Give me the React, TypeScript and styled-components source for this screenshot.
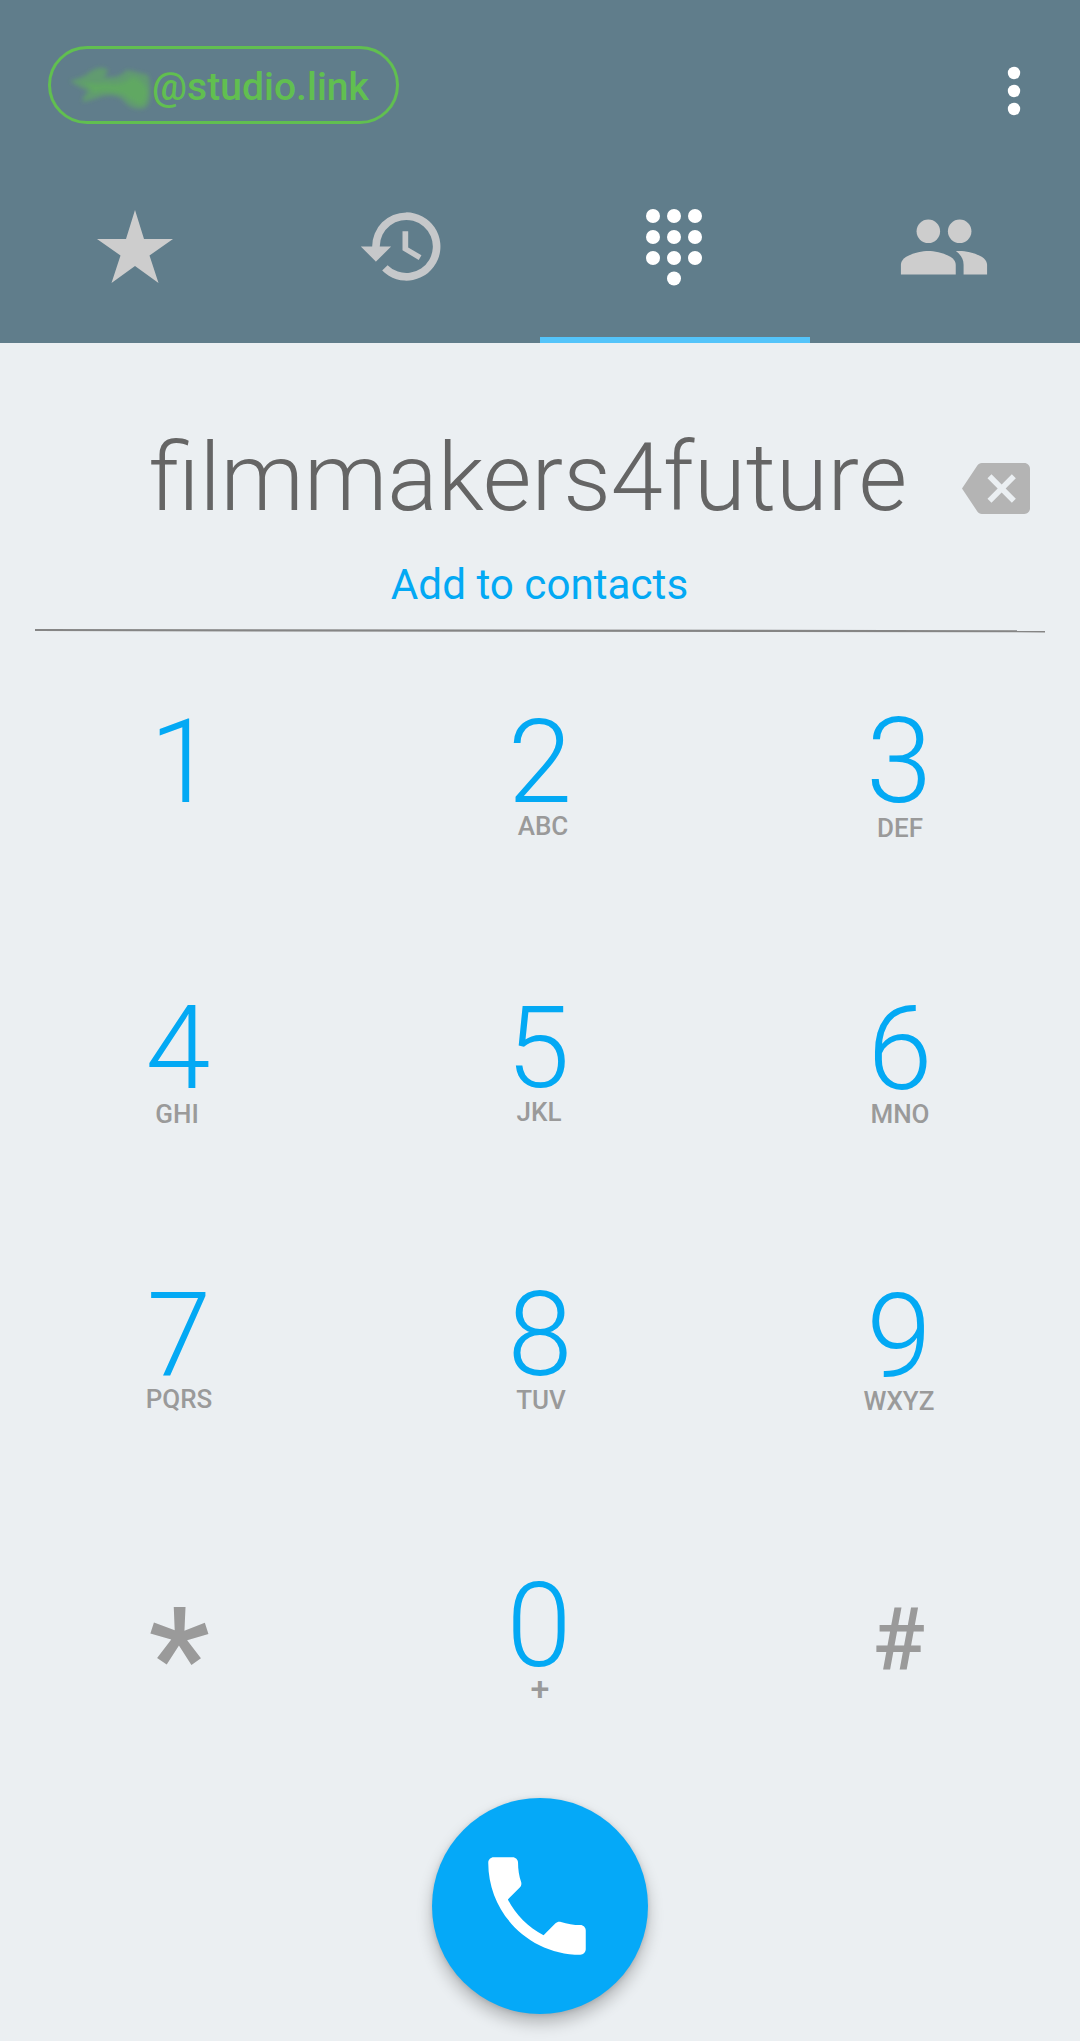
import React from "react";
import styled, { createGlobalStyle } from "styled-components";

const Global = createGlobalStyle`
  * { box-sizing: border-box; }
  body { margin: 0; background: #ebeff2; font-family: Roboto, "Liberation Sans", sans-serif; }
  button { border: 0; padding: 0; background: none; font: inherit; color: inherit; }
`;
const Screen = styled.main`
  width: 1080px; height: 2041px; display: flex; flex-direction: column; background: #ebeff2; overflow: hidden;
`;
const Header = styled.header`
  height: 343px; flex: none; display: flex; flex-direction: column; background: #607d8b;
`;
const Bar = styled.div`
  height: 172px; padding: 46px 56px 0 48px; display: flex; justify-content: space-between; align-items: flex-start;
`;
const Account = styled.div`
  width: 351px; height: 78px; border: 3px solid #61bf50; border-radius: 39px; color: #61bf50;
  display: flex; align-items: center; padding: 4px 0 0 20px; font-size: 39.1px; font-weight: 500; line-height: 68px;
`;
const Smudge = styled.svg`width: 81px; height: 48px; display: block; flex: none; overflow: visible;`;
const Menu = styled.button`height: 50px; margin-top: 20px; display: flex;`;
const Tabs = styled.nav`height: 171px; display: grid; grid-template-columns: repeat(4, 1fr);`;
const Tab = styled.button<{ $on?: boolean; $tint?: string }>`
  display: flex; justify-content: center; align-items: flex-start;
  color: ${p => (p.$on ? "#fff" : p.$tint ?? "#cdcdcd")};
  border-bottom: 6px solid ${p => (p.$on ? "#54c4fa" : "transparent")};
`;
const Glyph = styled.svg<{ $top?: number; $right?: number }>`
  display: block; flex: none; fill: currentColor; margin-top: ${p => p.$top ?? 0}px; margin-right: ${p => p.$right ?? 0}px;
`;
const Entry = styled.section`
  height: 289px; flex: none; margin: 0 35px; display: flex; flex-direction: column;
`;
const NumberRow = styled.div`
  height: 206px; flex: none; display: flex; align-items: flex-start; justify-content: flex-end; color: #b4b4b4;
`;
const Dialed = styled.div`
  margin: 80px 55px 0 0; font-size: 94px; line-height: 110px; font-weight: 300; color: #656565; white-space: nowrap;
`;
const Add = styled.button`
  color: #03a9f4; font-size: 42.2px; line-height: 60px; height: 79px; flex: none; text-align: center;
  display: flex; justify-content: center; align-items: flex-start; padding: 6px 1px 0 0;
`;
const Rule = styled.svg`display: block; width: 1010px; height: 4px; flex: none; overflow: visible;`;
const Pad = styled.section`
  flex: none; display: grid; grid-template-columns: repeat(3, 360px); grid-template-rows: repeat(4, 288px);
`;
const Key = styled.button<{ $x?: number; $y?: number }>`
  display: flex; flex-direction: column; align-items: center;
  padding-top: ${p => 65 + (p.$y ?? 0)}px;
  margin-left: ${p => p.$x ?? 0}px; margin-right: ${p => -(p.$x ?? 0)}px;
`;
const Digit = styled.span<{ $size?: number }>`
  color: #03a9f4; font-weight: 300; font-size: ${p => p.$size ?? 117}px; line-height: 122px; height: 111px; flex: none;
`;
const Letters = styled.span<{ $x?: number; $y?: number; $size?: number }>`
  color: #9a9a9a; font-size: ${p => p.$size ?? 26}px; line-height: 30px; font-weight: 500;
  margin-top: ${p => p.$y ?? 0}px; padding-left: ${p => Math.max(p.$x ?? 0, 0) * 2}px;
  padding-right: ${p => Math.max(-(p.$x ?? 0), 0) * 2}px;
`;
const Sign = styled.span<{ $size: number; $top: number }>`
  color: #9a9a9a; font-size: ${p => p.$size}px; line-height: 104px; font-weight: 500; margin-top: ${p => p.$top}px;
`;
const Call = styled.button`
  width: 216px; height: 216px; border-radius: 50%; background: #05a9f8; color: #fff; margin: 14px auto 0; flex: none;
  display: flex; align-items: center; justify-content: center;
  box-shadow: 0 9px 16px rgba(0,0,0,.24), 0 1px 5px rgba(0,0,0,.12);
`;

type KeySpec = { digit: string; letters?: string; x?: number; y?: number; lx?: number; ly?: number; size?: number; letterSize?: number };

const keys: KeySpec[] = [
  { digit: "1", x: 2, y: 4 },
  { digit: "2", letters: "ABC", y: 4, lx: 3, ly: -1, size: 116 },
  { digit: "3", letters: "DEF", x: -1, y: 4, lx: 1, ly: 1, size: 119 },
  { digit: "4", letters: "GHI", x: -2, y: 2, lx: -1, ly: 1 },
  { digit: "5", letters: "JKL", x: -2, y: 2, lx: 1, ly: -1, size: 114 },
  { digit: "6", letters: "MNO", y: 3 },
  { digit: "7", letters: "PQRS", x: -1, y: 1, ly: -1, size: 116 },
  { digit: "8", letters: "TUV", y: 1, lx: 1 },
  { digit: "9", letters: "WXYZ", x: -1, y: 2 },
];

const DialKey = ({ k }: { k: KeySpec }) => (
  <Key $x={k.x} $y={k.y}>
    <Digit $size={k.size}>{k.digit}</Digit>
    {k.letters && <Letters $x={k.lx} $y={k.ly} $size={k.letterSize}>{k.letters}</Letters>}
  </Key>
);

export default function App() {
  return (
    <Screen>
      <Global />
      <Header>
        <Bar>
          <Account>
            <Smudge viewBox="0 0 81 48">
              <defs>
                <filter id="soft" x="-20%" y="-20%" width="140%" height="140%"><feGaussianBlur stdDeviation="2.2" /></filter>
              </defs>
              <g filter="url(#soft)" fill="#61bf50">
                <path opacity=".45" d="M-1 18Q14 14 20 8Q30 2 37 7Q36 11 33 14Q48 16 56 7Q66 9 77 12Q80 21 79 34Q78 46 70 46Q58 46 52 37Q46 31 32 33Q24 36 12 39Q10 36 17 28Q8 24 -1 18Z" />
                <path opacity=".4" d="M10 18Q24 22 34 20Q50 24 62 14Q72 18 76 26Q77 38 70 42Q60 38 52 31Q34 26 22 30Q20 24 10 18Z" />
              </g>
            </Smudge>
            @studio.link
          </Account>
          <Menu aria-label="More">
            <svg width="20" height="50" fill="#fff">
              <circle cx="10" cy="7" r="6.2" /><circle cx="10" cy="25" r="6.2" /><circle cx="10" cy="43" r="6.2" />
            </svg>
          </Menu>
        </Bar>
        <Tabs>
          <Tab aria-label="Favourites">
            <Glyph $top={38} $right={1} width="76" height="73" viewBox="0 0 76 73"><path d="M38 0 47 29H76L52.5 45.500 61.500 73 38 56 14.500 73 23.500 45.500 0 29H29Z" /></Glyph>
          </Tab>
          <Tab aria-label="History" $tint="#c6c8ca">
            <Glyph $top={29} $right={5} width="91" height="91" viewBox="0 0 24 24"><path d="M13 3a9 9 0 0 0-9 9H1l3.890 3.890.070.140L9 12H6a7 7 0 1 1 2.060 4.940l-1.420 1.420A9 9 0 1 0 13 3zm-1 5v5l4.280 2.540.720-1.210-3.500-2.080V8H12z" /></Glyph>
          </Tab>
          <Tab aria-label="Dial pad" $on>
            <Glyph $top={36} $right={2} width="58" height="78">
              {[8, 29, 50].map(y => [8, 29, 50].map(x => <circle key={`${x}-${y}`} cx={x} cy={y} r="7" />))}
              <circle cx="29" cy="70.500" r="7" />
            </Glyph>
          </Tab>
          <Tab aria-label="Contacts">
            <Glyph $top={28} $right={2} width="94" height="94" viewBox="0 0 24 24">
              <circle cx="8" cy="8" r="3" /><circle cx="16" cy="8" r="3" />
              <path d="M8 13c-2.330 0-7 1.170-7 3.500V19h14v-2.500c0-2.330-4.670-3.500-7-3.500z" />
              <path d="M16 13c-.29 0-.62.02-.97.05 1.160.84 1.970 1.970 1.970 3.450V19h6v-2.500c0-2.330-4.670-3.500-7-3.500z" />
            </Glyph>
          </Tab>
        </Tabs>
      </Header>
      <Entry>
        <NumberRow>
          <Dialed>filmmakers4future</Dialed>
          <Glyph $top={120} $right={15} width="68" height="51" viewBox="0 3 24 18">
            <path d="M22 3H7c-.69 0-1.230.35-1.590.88L0 12l5.410 8.110c.36.53.9.89 1.590.89h15c1.100 0 2-.9 2-2V5c0-1.100-.9-2-2-2zm-3 12.590L17.590 17 14 13.410 10.410 17 9 15.590 12.590 12 9 8.410 10.410 7 14 10.590 17.590 7 19 8.410 15.410 12z" />
          </Glyph>
        </NumberRow>
        <Add>Add to contacts</Add>
        <Rule viewBox="0 0 1010 4"><path d="M0 2 1010 3.300" stroke="#858585" strokeWidth="2.2" /></Rule>
      </Entry>
      <Pad>
        {keys.map(k => <DialKey key={k.digit} k={k} />)}
        <Key $x={-1}><Sign $size={138} $top={45}>*</Sign></Key>
        <DialKey k={{ digit: "0", letters: "+", x: -1, y: 4, lx: 1, ly: -3, letterSize: 34 }} />
        <Key $x={-1}><Sign $size={87} $top={26}>#</Sign></Key>
      </Pad>
      <Call aria-label="Call">
        <Glyph $right={6} width="130" height="130" viewBox="0 0 24 24">
          <path d="M6.620 10.790c1.440 2.830 3.760 5.140 6.590 6.590l2.200-2.200c.270-.270.670-.360 1.020-.240 1.120.370 2.330.570 3.570.570.550 0 1 .450 1 1V20c0 .550-.450 1-1 1-9.390 0-17-7.610-17-17 0-.550.450-1 1-1h3.500c.550 0 1 .450 1 1 0 1.250.200 2.450.570 3.570.110.350.030.740-.250 1.020l-2.200 2.200z" />
        </Glyph>
      </Call>
    </Screen>
  );
}
